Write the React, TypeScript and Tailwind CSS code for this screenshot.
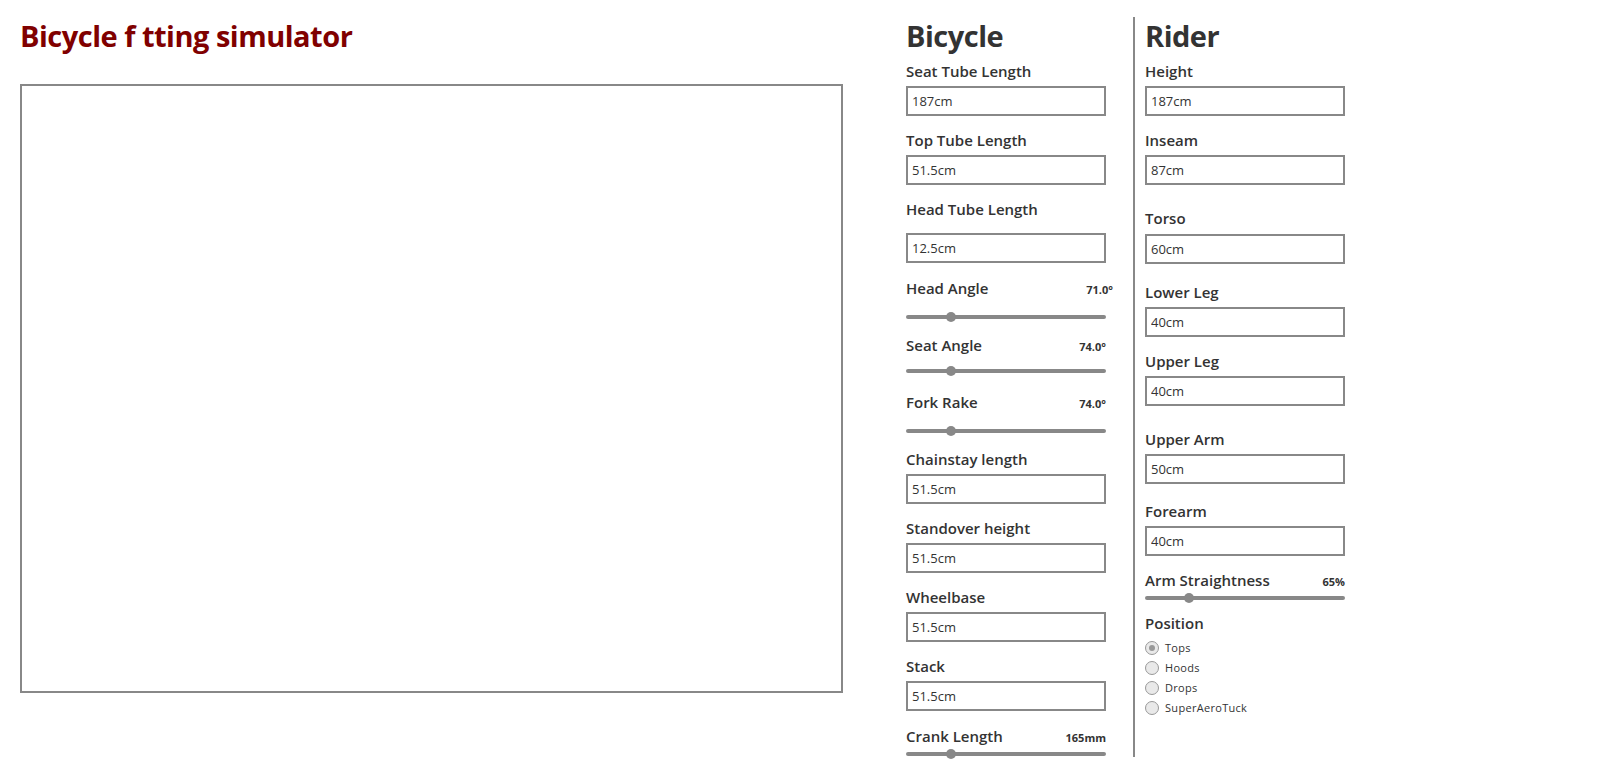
import React from "react";

const FONT = "font-['Open_Sans',sans-serif]";

function Label({ text, value, className, wide }: { text: string; value?: string; className: string; wide?: boolean }) {
  return (
    <div
      className={`${className} ${wide ? "w-[207px]" : "w-[200px]"} flex h-[20px] items-baseline justify-between leading-[18px] text-[#333]`}
    >
      <span className="text-[15px] font-semibold">{text}</span>
      {value ? <span className="text-[11px] font-bold">{value}</span> : null}
    </div>
  );
}

function Field({ value, className }: { value: string; className: string }) {
  return (
    <input
      readOnly
      value={value}
      className={`${className} block h-[30px] w-[200px] border-2 border-[#888] bg-white px-[4px] text-[13px] text-[#333] outline-none`}
    />
  );
}

function Slider({ className, thumb }: { className: string; thumb: string }) {
  return (
    <div className={`${className} relative h-[10px] w-[200px]`}>
      <div className="absolute left-0 right-0 top-[3px] h-[4px] rounded-full bg-[#888]" />
      <div className={`${thumb} absolute top-0 h-[10px] w-[10px] rounded-full bg-[#888]`} />
    </div>
  );
}

function Radio({ label, checked, className }: { label: string; checked?: boolean; className?: string }) {
  return (
    <div className={`${className ?? ""} flex h-[20px] items-center gap-[6px]`}>
      <span className="flex h-[14px] w-[14px] items-center justify-center rounded-full border border-[#999] bg-[#e9e9e9]">
        {checked ? <span className="h-[6px] w-[6px] rounded-full bg-[#999]" /> : null}
      </span>
      <span className="text-[11px] leading-[20px] tracking-[0.3px] text-[#333]">{label}</span>
    </div>
  );
}

export default function App() {
  return (
    <div className={`${FONT} flex min-h-[779px] w-[1600px] bg-white pl-[20px] pt-[17px]`}>
      {/* left: title + canvas */}
      <div className="flex w-[823px] flex-col">
        <h1 className="h-[37px] text-[29px] font-bold leading-[37px] tracking-[-0.5px] text-[#800000]">
          Bicycle f tting simulator
        </h1>
        <div className="mt-[30px] h-[609px] w-[823px] border-2 border-[#888] bg-white" />
      </div>

      {/* bicycle column */}
      <div className="ml-[63px] flex w-[200px] flex-col">
        <h2 className="h-[37px] text-[29px] font-bold leading-[37px] tracking-[-0.5px] text-[#333]">Bicycle</h2>
        <Label className="mt-[8px]" text="Seat Tube Length" />
        <Field className="mt-[4px]" value="187cm" />
        <Label className="mt-[15px]" text="Top Tube Length" />
        <Field className="mt-[4px]" value="51.5cm" />
        <Label className="mt-[15px]" text="Head Tube Length" />
        <Field className="mt-[13px]" value="12.5cm" />
        <Label className="mt-[16px]" text="Head Angle" value="71.0°" wide />
        <Slider className="mt-[13px]" thumb="left-[40px]" />
        <Label className="mt-[14px]" text="Seat Angle" value="74.0°" />
        <Slider className="mt-[10px]" thumb="left-[40px]" />
        <Label className="mt-[17px]" text="Fork Rake" value="74.0°" />
        <Slider className="mt-[13px]" thumb="left-[40px]" />
        <Label className="mt-[14px]" text="Chainstay length" />
        <Field className="mt-[4px]" value="51.5cm" />
        <Label className="mt-[15px]" text="Standover height" />
        <Field className="mt-[4px]" value="51.5cm" />
        <Label className="mt-[15px]" text="Wheelbase" />
        <Field className="mt-[4px]" value="51.5cm" />
        <Label className="mt-[15px]" text="Stack" />
        <Field className="mt-[4px]" value="51.5cm" />
        <Label className="mt-[16px]" text="Crank Length" value="165mm" />
        <Slider className="mt-[2px]" thumb="left-[40px]" />
      </div>

      {/* divider */}
      <div className="ml-[27px] h-[740px] w-[2px] bg-[#888]" />

      {/* rider column */}
      <div className="ml-[10px] flex w-[200px] flex-col">
        <h2 className="h-[37px] text-[29px] font-bold leading-[37px] tracking-[-0.5px] text-[#333]">Rider</h2>
        <Label className="mt-[8px]" text="Height" />
        <Field className="mt-[4px]" value="187cm" />
        <Label className="mt-[15px]" text="Inseam" />
        <Field className="mt-[4px]" value="87cm" />
        <Label className="mt-[24px]" text="Torso" />
        <Field className="mt-[5px]" value="60cm" />
        <Label className="mt-[19px]" text="Lower Leg" />
        <Field className="mt-[4px]" value="40cm" />
        <Label className="mt-[15px]" text="Upper Leg" />
        <Field className="mt-[4px]" value="40cm" />
        <Label className="mt-[24px]" text="Upper Arm" />
        <Field className="mt-[4px]" value="50cm" />
        <Label className="mt-[18px]" text="Forearm" />
        <Field className="mt-[4px]" value="40cm" />
        <Label className="mt-[15px]" text="Arm Straightness" value="65%" />
        <Slider className="mt-[2px]" thumb="left-[39px]" />
        <Label className="mt-[11px]" text="Position" />
        <Radio className="mt-[4px]" label="Tops" checked />
        <Radio label="Hoods" />
        <Radio label="Drops" />
        <Radio label="SuperAeroTuck" />
      </div>
    </div>
  );
}
